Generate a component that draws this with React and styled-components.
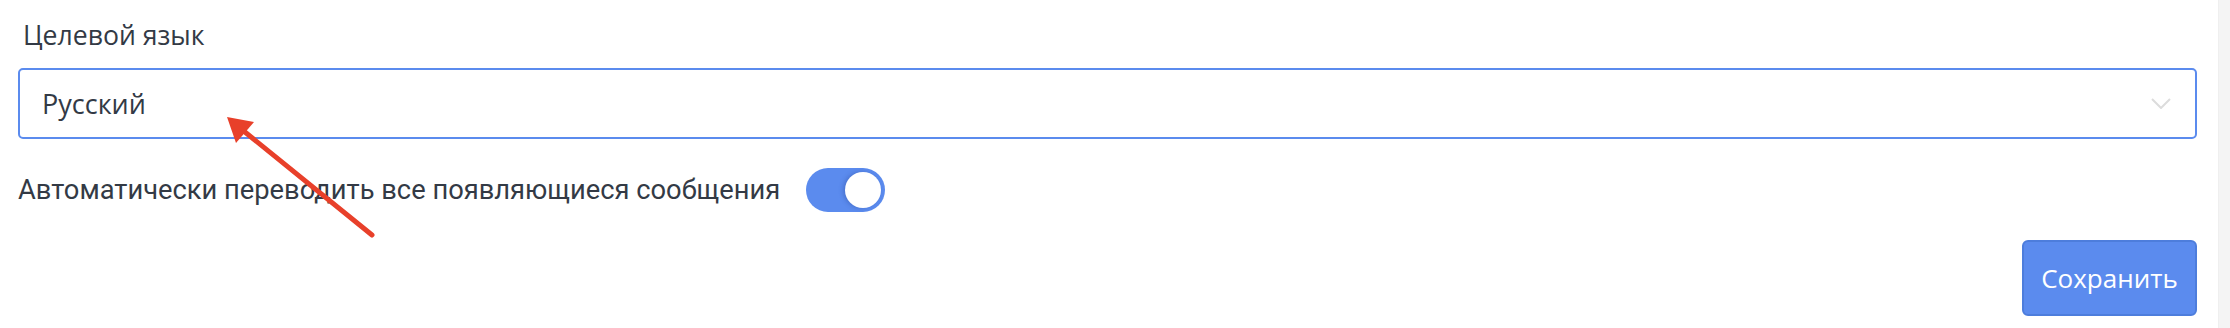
import React from 'react';
import styled, { createGlobalStyle } from 'styled-components';

// Global //
// -------//
const GlobalStyle = createGlobalStyle`
  html, body {
    margin: 0;
    padding: 0;
    background: #ffffff;
  }
  * { box-sizing: border-box; }
`;

// Tokens //
// -------//
const accent = '#5b8bee';
const accentBorder = '#4d7ddc';
const textColor = '#333a45';

// Styles //
// -------//
const Page = styled.div`
  display: flex;
  width: 2230px;
  height: 328px;
  background: #ffffff;
  position: relative;
  overflow: hidden;
`;

const Content = styled.div`
  flex: 1;
  display: flex;
  flex-direction: column;
  padding: 17px 21px 0 18px;
`;

const ScrollTrack = styled.div`
  width: 12px;
  background: #f4f4f4;
  border-left: 1px solid #efefef;
`;

const FieldLabel = styled.div`
  font-family: "Open Sans", "Noto Sans", sans-serif;
  font-size: 26.6px;
  line-height: 36px;
  color: ${textColor};
  padding-left: 5px;
  margin-bottom: 15px;
`;

const Select = styled.div`
  display: flex;
  align-items: center;
  justify-content: space-between;
  height: 71px;
  padding: 0 24px 0 22px;
  border: 2px solid ${accent};
  border-radius: 5px;
  background: #fff;
  font-family: "Open Sans", "Noto Sans", sans-serif;
  font-size: 27px;
  color: ${textColor};
`;

const Chevron = styled.svg`
  width: 20px;
  height: 11px;
  flex-shrink: 0;
`;

const ToggleRow = styled.div`
  display: flex;
  align-items: center;
  gap: 26px;
  margin-top: 29px;
`;

const ToggleText = styled.span`
  font-family: "Roboto", "Noto Sans", sans-serif;
  font-size: 27.3px;
  color: ${textColor};
`;

const Switch = styled.div`
  display: flex;
  align-items: center;
  justify-content: ${(p) => (p.$on ? 'flex-end' : 'flex-start')};
  width: 79px;
  height: 44px;
  padding: 0 4px;
  border-radius: 22px;
  background: ${(p) => (p.$on ? accent : '#ccc')};
`;

const Knob = styled.div`
  width: 36px;
  height: 36px;
  border-radius: 50%;
  background: #fff;
  box-shadow: -2px 0 4px rgba(40, 70, 150, 0.35);
`;

const Actions = styled.div`
  display: flex;
  justify-content: flex-end;
  margin-top: 28px;
`;

const SaveButton = styled.button`
  width: 175px;
  height: 76px;
  border: 2px solid ${accentBorder};
  border-radius: 6px;
  background: ${accent};
  color: #fff;
  font-family: "Open Sans", "Noto Sans", sans-serif;
  font-size: 26px;
  padding: 0;
  cursor: pointer;
`;

const Annotation = styled.svg`
  position: absolute;
  left: 0;
  top: 0;
  pointer-events: none;
`;

// Component //
// ----------//
function App() {
  return (
    <Page>
      <GlobalStyle />
      <Content>
        <FieldLabel>Целевой язык</FieldLabel>
        <Select>
          <span>Русский</span>
          <Chevron viewBox="0 0 20 11">
            <path d="M1 1 L10 10 L19 1" fill="none" stroke="#dcdcdc" strokeWidth="2" />
          </Chevron>
        </Select>
        <ToggleRow>
          <ToggleText>Автоматически переводить все появляющиеся сообщения</ToggleText>
          <Switch $on>
            <Knob />
          </Switch>
        </ToggleRow>
        <Actions>
          <SaveButton>Сохранить</SaveButton>
        </Actions>
      </Content>
      <ScrollTrack />
      <Annotation width="400" height="260" viewBox="0 0 400 260">
        <line x1="372" y1="235" x2="240" y2="128" stroke="#e8402a" strokeWidth="5" strokeLinecap="round" />
        <polygon points="227,117 254,122 236,143" fill="#e8402a" />
      </Annotation>
    </Page>
  );
}

export default App;
